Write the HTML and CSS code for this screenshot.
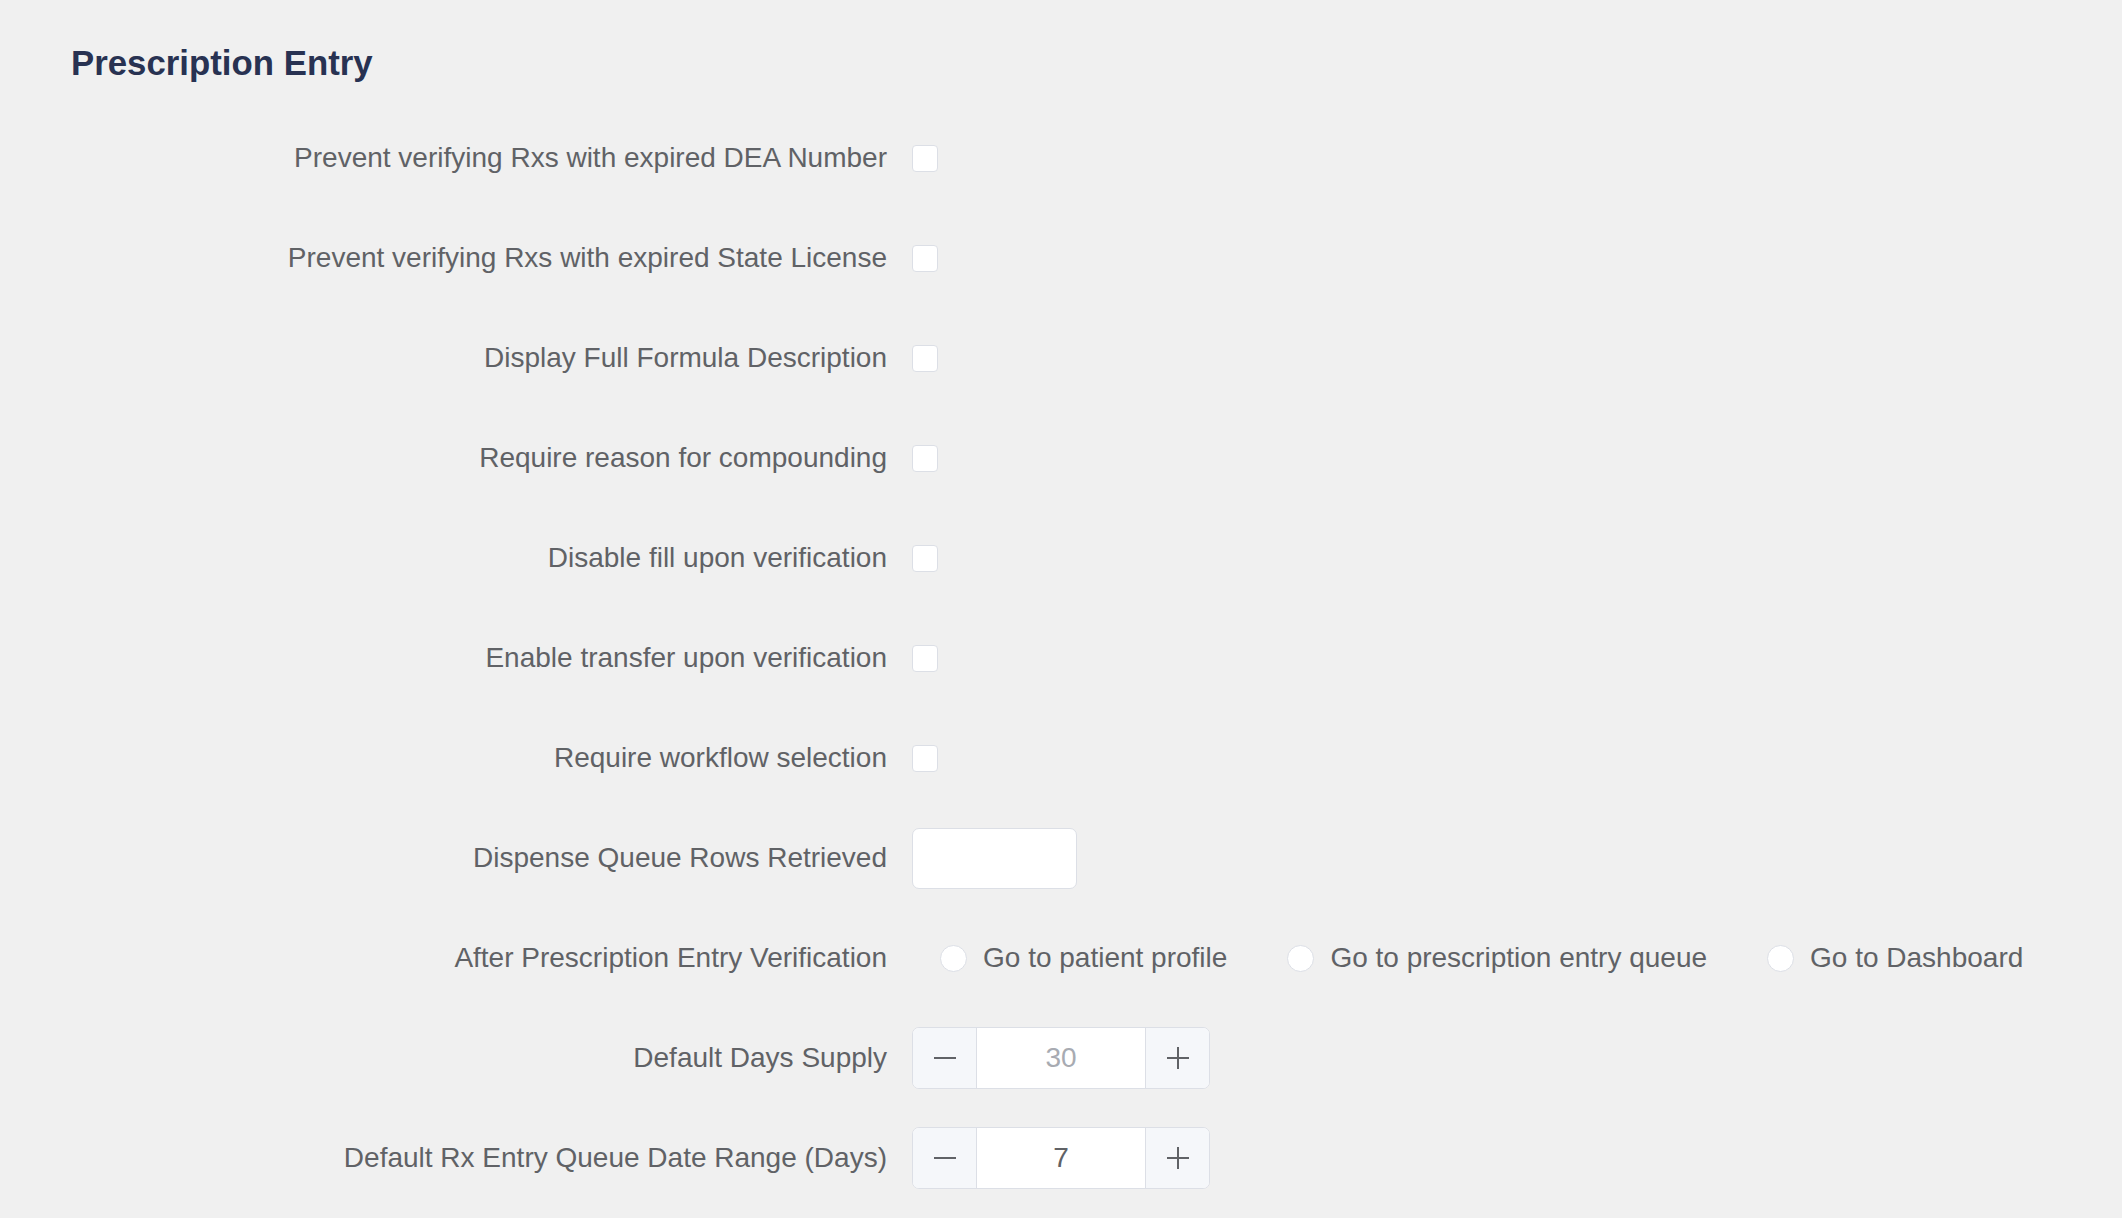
FILE: index.html
```html
<!DOCTYPE html>
<html lang="en">
<head>
<meta charset="utf-8">
<title>Prescription Entry</title>
<link rel="stylesheet" href="styles.css">
</head>
<body>
<div class="page">
  <h1 class="title">Prescription Entry</h1>
  <form class="form">
    <div class="row">
      <label class="label">Prevent verifying Rxs with expired DEA Number</label>
      <div class="field"><span class="checkbox"></span></div>
    </div>
    <div class="row">
      <label class="label">Prevent verifying Rxs with expired State License</label>
      <div class="field"><span class="checkbox"></span></div>
    </div>
    <div class="row">
      <label class="label">Display Full Formula Description</label>
      <div class="field"><span class="checkbox"></span></div>
    </div>
    <div class="row">
      <label class="label">Require reason for compounding</label>
      <div class="field"><span class="checkbox"></span></div>
    </div>
    <div class="row">
      <label class="label">Disable fill upon verification</label>
      <div class="field"><span class="checkbox"></span></div>
    </div>
    <div class="row">
      <label class="label">Enable transfer upon verification</label>
      <div class="field"><span class="checkbox"></span></div>
    </div>
    <div class="row">
      <label class="label">Require workflow selection</label>
      <div class="field"><span class="checkbox"></span></div>
    </div>
    <div class="row">
      <label class="label">Dispense Queue Rows Retrieved</label>
      <div class="field"><span class="textbox"></span></div>
    </div>
    <div class="row">
      <label class="label">After Prescription Entry Verification</label>
      <div class="field radios">
        <span class="radio"><span class="radio-dot"></span><span class="radio-text">Go to patient profile</span></span>
        <span class="radio"><span class="radio-dot"></span><span class="radio-text">Go to prescription entry queue</span></span>
        <span class="radio"><span class="radio-dot"></span><span class="radio-text">Go to Dashboard</span></span>
      </div>
    </div>
    <div class="row">
      <label class="label">Default Days Supply</label>
      <div class="field">
        <div class="stepper">
          <span class="step-btn step-minus"><svg width="22" height="22" viewBox="0 0 22 22"><path d="M0 11H22" stroke="#606266" stroke-width="2"/></svg></span>
          <span class="step-value placeholder">30</span>
          <span class="step-btn step-plus"><svg width="22" height="22" viewBox="0 0 22 22"><path d="M0 11H22M11 0V22" stroke="#606266" stroke-width="2"/></svg></span>
        </div>
      </div>
    </div>
    <div class="row">
      <label class="label">Default Rx Entry Queue Date Range (Days)</label>
      <div class="field">
        <div class="stepper">
          <span class="step-btn step-minus"><svg width="22" height="22" viewBox="0 0 22 22"><path d="M0 11H22" stroke="#606266" stroke-width="2"/></svg></span>
          <span class="step-value">7</span>
          <span class="step-btn step-plus"><svg width="22" height="22" viewBox="0 0 22 22"><path d="M0 11H22M11 0V22" stroke="#606266" stroke-width="2"/></svg></span>
        </div>
      </div>
    </div>
  </form>
</div>
</body>
</html>
```

FILE: styles.css
```css
html, body {
  margin: 0;
  padding: 0;
  background: #f0f0f0;
}

body {
  font-family: "Liberation Sans", Arial, sans-serif;
  color: #606266;
}

.page {
  padding: 45px 0 0 71px;
}

.title {
  margin: 0;
  font-size: 34.8px;
  line-height: 35px;
  font-weight: bold;
  color: #283252;
}

.form {
  margin-top: 47px;
  display: flex;
  flex-direction: column;
  gap: 38px;
}

.row {
  display: flex;
  align-items: center;
  height: 62px;
}

.label {
  width: 816px;
  flex: none;
  text-align: right;
  font-size: 28px;
  color: #606266;
  white-space: nowrap;
}

.field {
  margin-left: 25px;
  display: flex;
  align-items: center;
}

.checkbox {
  display: block;
  width: 24px;
  height: 25px;
  box-sizing: content-box;
  background: #fff;
  border: 1.5px solid #dcdfe6;
  border-radius: 4px;
}

.textbox {
  display: block;
  width: 163px;
  height: 59px;
  background: #fff;
  border: 1.5px solid #dcdfe6;
  border-radius: 7px;
}

.radios {
  margin-left: 53px;
  gap: 60px;
}

.radio {
  display: flex;
  align-items: center;
  gap: 16px;
  font-size: 28px;
  color: #606266;
  white-space: nowrap;
}

.radio-dot {
  display: block;
  width: 25px;
  height: 25px;
  background: #fff;
  border: 1.5px solid #dcdfe6;
  border-radius: 50%;
}

.stepper {
  display: flex;
  width: 298px;
  height: 62px;
  box-sizing: border-box;
  border: 1.5px solid #dcdfe6;
  border-radius: 7px;
  overflow: hidden;
  background: #fff;
}

.step-btn {
  width: 63px;
  flex: none;
  display: flex;
  align-items: center;
  justify-content: center;
  background: #f5f7fa;
}

.step-minus {
  border-right: 1.5px solid #dcdfe6;
}

.step-plus {
  border-left: 1.5px solid #dcdfe6;
}

.step-value {
  flex: 1;
  display: flex;
  align-items: center;
  justify-content: center;
  font-size: 28px;
  color: #606266;
}

.step-value.placeholder {
  color: #a8abb2;
}
```
